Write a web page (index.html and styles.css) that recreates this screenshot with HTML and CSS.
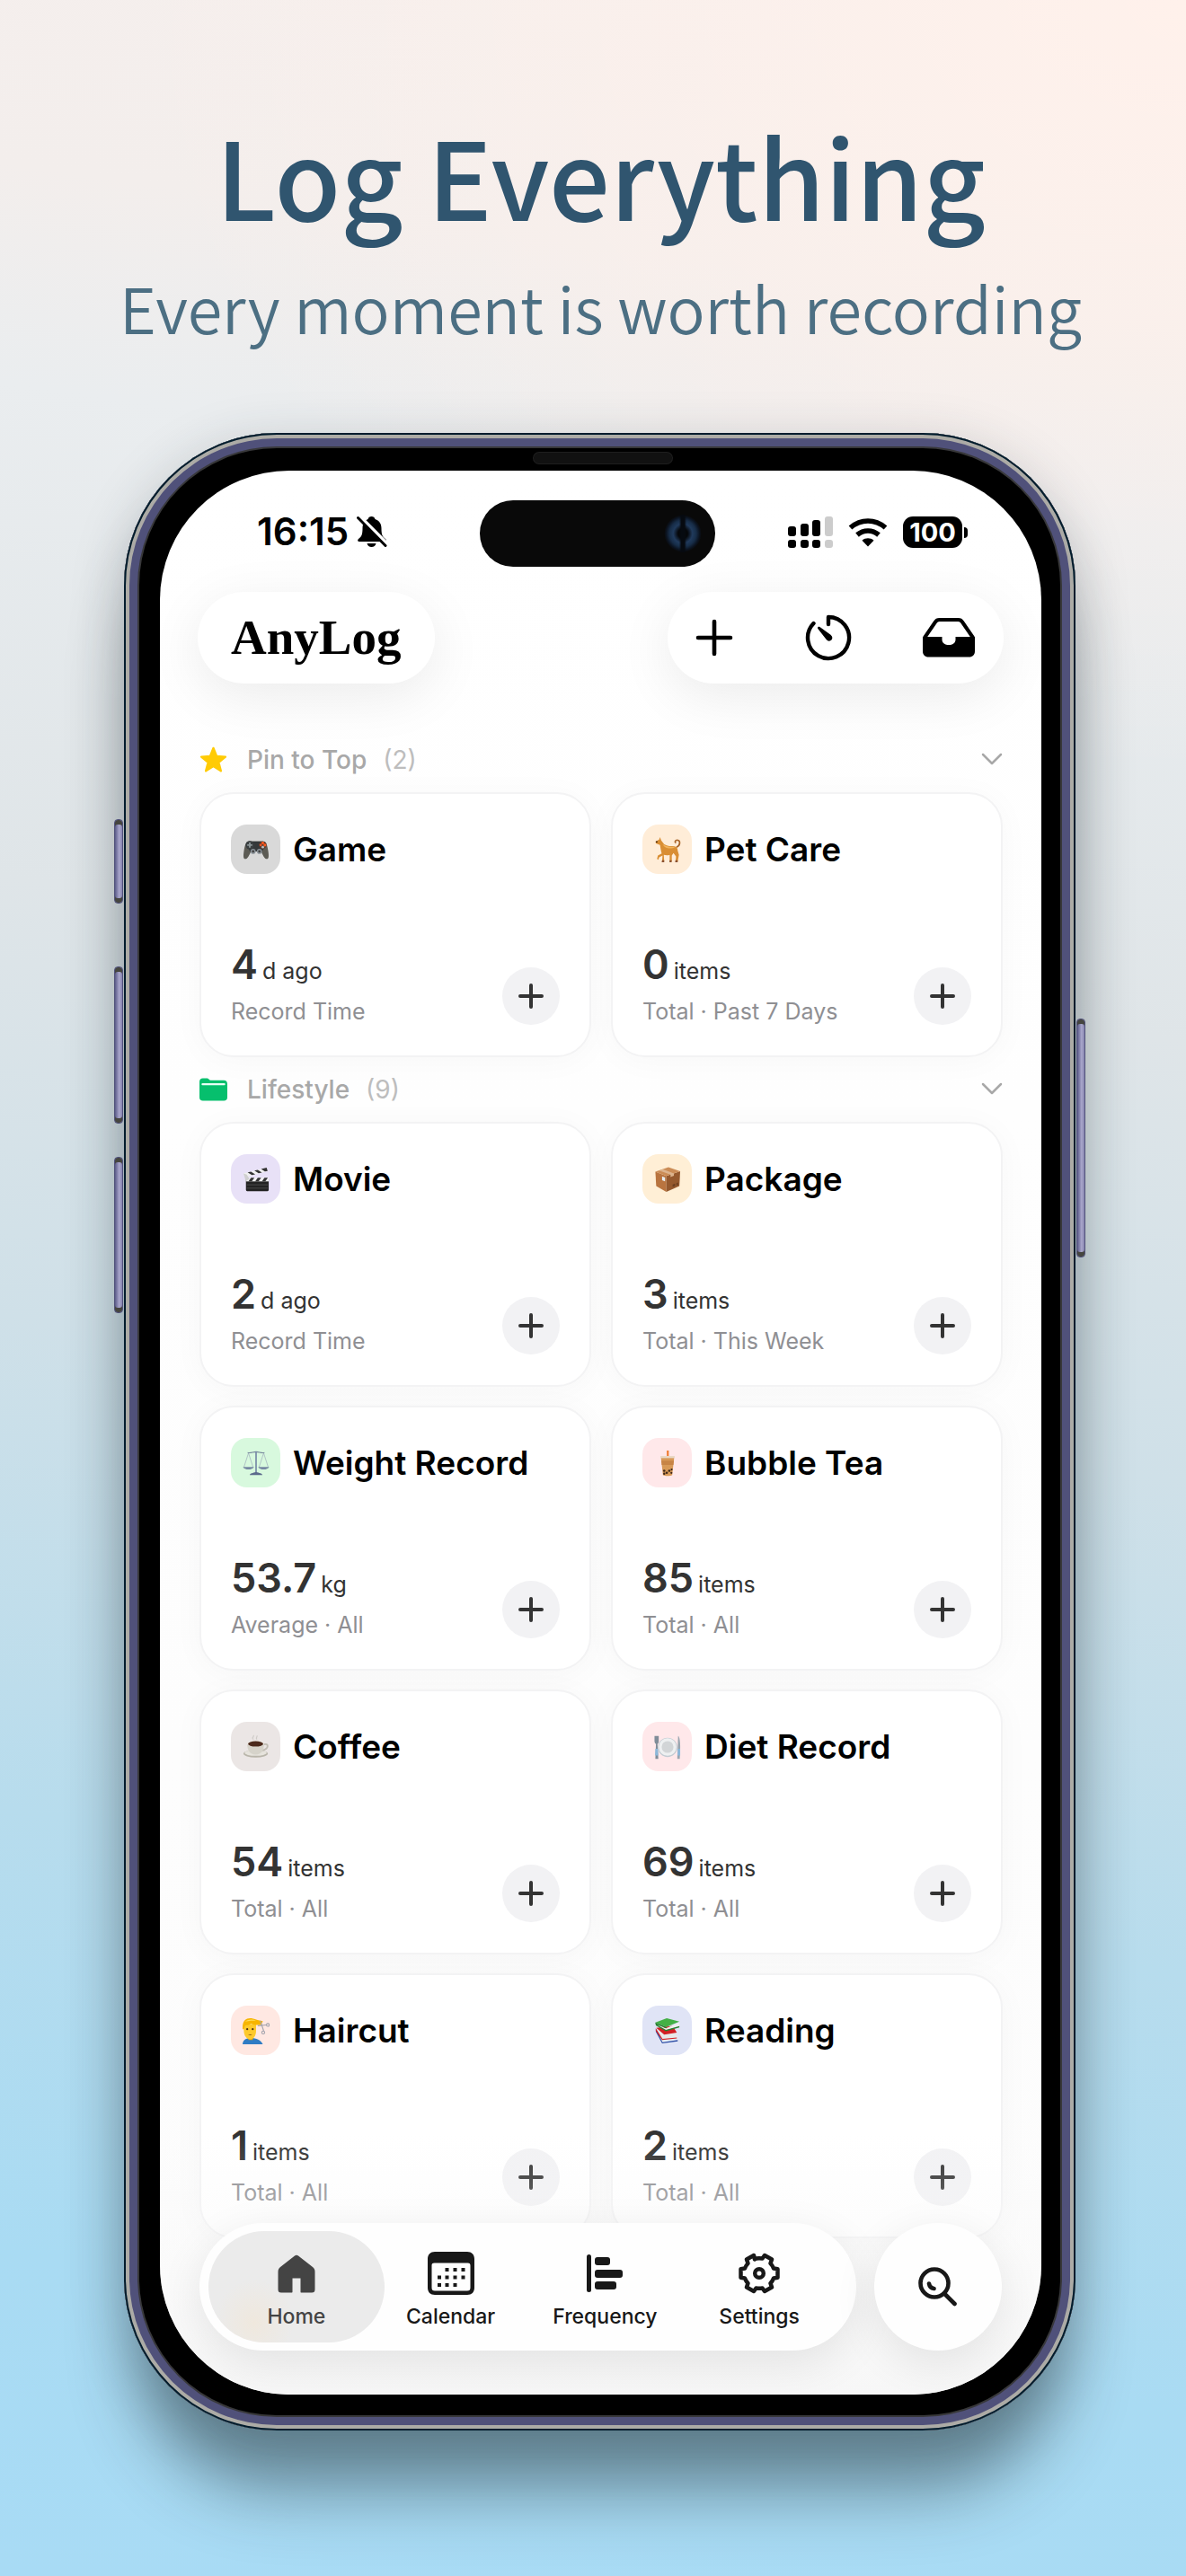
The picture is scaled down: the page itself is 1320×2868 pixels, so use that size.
FILE: index.html
```html
<!DOCTYPE html>
<html lang="en">
<head>
<meta charset="utf-8">
<meta name="viewport" content="width=device-width, initial-scale=1">
<title>AnyLog – Log Everything</title>
<link rel="stylesheet" href="styles.css">
</head>
<body>
<svg class="sprite" aria-hidden="true">
  <symbol id="plus" viewBox="0 0 28 28"><path d="M14 2v24M2 14h24" fill="none" stroke="currentColor" stroke-width="4" stroke-linecap="round"/></symbol>
  <symbol id="chevron" viewBox="0 0 24 16"><path d="M2 2l10 10L22 2" fill="none" stroke="currentColor" stroke-width="2.500" stroke-linecap="round" stroke-linejoin="round"/></symbol>
</svg>
<main class="page">
  <header class="hero">
    <h1 class="hero-title">Log Everything</h1>
    <p class="hero-sub">Every moment is worth recording</p>
  </header>

  <div class="phone">
    <span class="key key-action"></span>
    <span class="key key-up"></span>
    <span class="key key-down"></span>
    <span class="key key-power"></span>
    <span class="speaker"></span>

    <div class="screen">
      <div class="status">
        <div class="status-left">
          <span class="clock">16:15</span>
          <svg class="bell" viewBox="0 0 34 36" aria-label="Silent"><path d="M16.500 1c2 0 3.500 1.300 4 3 4.500 1.600 7 5 7 10 0 7 1 9.500 4.500 12 1.500 1.200 1 3-1 3H3c-2 0-2.500-1.800-1-3 3.500-2.500 4.500-5 4.500-12 0-5 2-8.400 6-10 .5-1.700 2-3 4-3zM11.500 31h10c-.5 2.500-2.500 4-5 4s-4.500-1.500-5-4z" fill="#000"/><path d="M3 .5L35 32.500" stroke="#fff" stroke-width="4"/><path d="M1.500 2.500L32 33.500" stroke="#000" stroke-width="3" stroke-linecap="round"/></svg>
        </div>
        <div class="island"><span class="lens"></span></div>
        <div class="status-right">
          <svg class="signal" viewBox="0 0 50 35" aria-label="Signal"><g fill="#000"><rect y="11" width="9" height="11" rx="3"/><rect x="14" y="8" width="9" height="14" rx="3"/><rect x="27" y="4" width="9" height="18" rx="3"/><rect y="26" width="9" height="9" rx="3"/><rect x="14" y="26" width="9" height="9" rx="3"/><rect x="27" y="26" width="9" height="9" rx="3"/></g><g fill="#ccc"><rect x="41" width="9" height="22" rx="3"/><rect x="41" y="26" width="9" height="9" rx="3"/></g></svg>
          <svg class="wifi" viewBox="0 0 44 33" aria-label="Wi-Fi"><path d="M22 32.500l-6.500-6.800c3.700-3.200 9.300-3.200 13 0z" fill="#000"/><path d="M10 19.500c7-6 17-6 24 0M2.500 11.500c11.500-10 27.500-10 39 0" fill="none" stroke="#000" stroke-width="5.600"/></svg>
          <span class="battery">100</span>
        </div>
      </div>

      <div class="topbar">
        <div class="pill brand">AnyLog</div>
        <div class="pill actions">
          <button class="action" aria-label="Add"><svg width="42" height="42" viewBox="0 0 42 42"><path d="M21 3v36M3 21h36" fill="none" stroke="#000" stroke-width="4.600" stroke-linecap="round"/></svg></button>
          <button class="action" aria-label="Timer"><svg width="52" height="52" viewBox="0 0 52 52"><path d="M26 11V3a23 23 0 1 1-16.500 7" fill="none" stroke="#000" stroke-width="4.400" stroke-linecap="round" stroke-linejoin="round"/><path d="M14.300 14.200c.7-.7 1.400-.6 2.100-.1l12.100 8.600c2.200 1.700 2.400 4.300.9 5.900-1.700 1.700-4.300 1.400-5.900-.8L14.300 16c-.5-.7-.5-1.300 0-1.800z" fill="#000"/></svg></button>
          <button class="action" aria-label="Inbox"><svg width="58" height="44" viewBox="0 0 58 44"><path d="M2 22L14 4.500C15 2.800 16.500 2 18.500 2h21c2 0 3.500.8 4.500 2.500L56 22" fill="none" stroke="#000" stroke-width="4" stroke-linejoin="round"/><path d="M0 21h21.500v3c0 4 3.500 6 7.500 6s7.500-2 7.500-6v-3H58v16c0 4-2.500 6.500-6.500 6.500h-45C2.500 43.500 0 41 0 37z" fill="#000"/></svg></button>
        </div>
      </div>

      <section class="group">
        <header class="group-head">
          <svg class="group-icon" viewBox="0 0 32 30"><path d="M16 1.500l3.700 9.400 10.100.6-7.800 6.400 2.600 9.800L16 22.200l-8.600 5.500L10 17.900l-7.800-6.400 10.100-.6z" fill="#ffcb05" stroke="#ffcb05" stroke-width="2.500" stroke-linejoin="round"/></svg>
          <h2 class="group-name">Pin to Top</h2><span class="group-count">(2)</span>
          <button class="fold" aria-label="Collapse Pin to Top"><svg width="24" height="16"><use href="#chevron"/></svg></button>
        </header>
        <div class="cards">
          <article class="card">
            <div class="card-head"><span class="tile gray"><svg viewBox="0 0 32 32"><path d="M8 6h16c4 0 5.500 5 6.500 12 .7 5 .8 9-1.700 9-2.800 0-4.800-5-6.800-9H10c-2 4-4 9-6.800 9-2.500 0-2.400-4-1.700-9C2.500 11 4 6 8 6z" fill="#5c5b54"/><path d="M8 6h16c2 0 3 2 3.500 5L23 18H9l-4.500-7C5 8 6 6 8 6z" fill="#34383a"/><circle cx="8.500" cy="10.500" r="5" fill="#3a3f41"/><path d="M8.500 7.500v6M5.500 10.500h6" stroke="#8b9597" stroke-width="2"/><circle cx="12.500" cy="18" r="3" fill="#8a9299"/><circle cx="20" cy="18" r="3" fill="#8a9299"/><circle cx="12.500" cy="18" r="1.500" fill="#444"/><circle cx="20" cy="18" r="1.500" fill="#444"/><circle cx="24" cy="10.500" r="4.500" fill="#5a3b30"/><circle cx="24" cy="8" r="1.700" fill="#ff5a1f"/><circle cx="21.500" cy="10.500" r="1.500" fill="#e8572a"/><circle cx="26.500" cy="10.500" r="1.700" fill="#ff5a1f"/><circle cx="24" cy="13" r="1.500" fill="#b9c1c4"/></svg></span><h3 class="card-title">Game</h3></div>
            <div class="card-foot"><div class="stat"><p class="value">4 <small class="unit">d ago</small></p><p class="note">Record Time</p></div><button class="add" aria-label="Add Game"><svg width="28" height="28"><use href="#plus"/></svg></button></div>
          </article>
          <article class="card">
            <div class="card-head"><span class="tile orange"><svg viewBox="0 0 32 32"><path d="M7 1l1.500 4L12 9.500c4 2.500 8 2 12 2.500 2.500.5 4 2 4 5l1.500 5-1.500 8h-2.500l.5-6-3-4-2 3v7h-2.500v-8c-3 1-5 .5-7 0L12 30H9.500l.5-7-4 2-1 3-1.500-1 1-4 4.500-2.500C8 17 7.500 13 7 10.500l-5-2V6l4-2z" fill="#d98e33"/><path d="M10 9c4 4 9 3 15 4-4 2-12 3-15-4z" fill="#f2b45c"/><path d="M26.500 13c5-2 5-8 1-8.500-2.500 0-3.500 2.500-1.500 3.500" fill="none" stroke="#a9652a" stroke-width="1.800"/><path d="M2 6h2v1.500H2z" fill="#3b2412"/><path d="M9.500 28.500H12V31H9zM18.500 28.500h2.300V31h-2.600zM25.300 28.500H28V31h-3z" fill="#8a5030"/></svg></span><h3 class="card-title">Pet Care</h3></div>
            <div class="card-foot"><div class="stat"><p class="value">0 <small class="unit">items</small></p><p class="note">Total · Past 7 Days</p></div><button class="add" aria-label="Add Pet Care"><svg width="28" height="28"><use href="#plus"/></svg></button></div>
          </article>
        </div>
      </section>

      <section class="group">
        <header class="group-head">
          <svg class="group-icon" viewBox="0 0 32 26"><path d="M0 4c0-2.500 1.500-4 4-4h4.500C11 0 11 2.500 13.500 2.500H28c2.500 0 4 1.500 4 4V22c0 2.500-1.500 4-4 4H4c-2.500 0-4-1.500-4-4z" fill="#06bf6d"/><path d="M3.500 7h25" stroke="#e8fff5" stroke-width="2.200" stroke-linecap="round"/></svg>
          <h2 class="group-name">Lifestyle</h2><span class="group-count">(9)</span>
          <button class="fold" aria-label="Collapse Lifestyle"><svg width="24" height="16"><use href="#chevron"/></svg></button>
        </header>
        <div class="cards">
          <article class="card">
            <div class="card-head"><span class="tile violet"><svg viewBox="0 0 32 32"><path d="M4 16h27v12.500c0 1-.6 1.500-1.500 1.500h-24C4.600 30 4 29.500 4 28.500z" fill="#232323"/><path d="M1 9L28.500 2l1.200 4.500L2.500 13.500z" fill="#f1f1f1"/><path d="M6 7.800L11 11l4-1-5-3.200zM14 5.700l5 3.200 4-1-5-3.200zM22 3.700l4.500 3L29.700 6 28.500 2z" fill="#333"/><path d="M4 14h27v4.500H4z" fill="#f1f1f1"/><path d="M7 18.500l3-4.500h4l-3 4.500zM15 18.500l3-4.500h4l-3 4.500zM23 18.500l3-4.500h4l-3 4.500z" fill="#333"/><path d="M1 9l4 1.500 3 5-4 3z" fill="#cfcfcf"/><path d="M5 22.500h25M5 26.500h25" stroke="#555" stroke-width=".8"/></svg></span><h3 class="card-title">Movie</h3></div>
            <div class="card-foot"><div class="stat"><p class="value">2 <small class="unit">d ago</small></p><p class="note">Record Time</p></div><button class="add" aria-label="Add Movie"><svg width="28" height="28"><use href="#plus"/></svg></button></div>
          </article>
          <article class="card">
            <div class="card-head"><span class="tile amber"><svg viewBox="0 0 32 32"><path d="M1.500 7l13 5v19L2.500 24z" fill="#b9743f"/><path d="M14.500 12L31 6.500 30 24l-15.500 7z" fill="#95592e"/><path d="M1.500 7L17 1.500l14 5L14.500 12z" fill="#cb8c56"/><path d="M6 5.500l13.500 4.800v3l4-1.500V9L10.500 4z" fill="#dcb38d"/><path d="M9.500 12.500l3.500 1.300v4.500L9.500 17z" fill="#e7eef2"/><path d="M22 22l3-1v3l-3 1zM26.500 20.500l2-.7v3l-2 .7z" fill="#6c3f20"/></svg></span><h3 class="card-title">Package</h3></div>
            <div class="card-foot"><div class="stat"><p class="value">3 <small class="unit">items</small></p><p class="note">Total · This Week</p></div><button class="add" aria-label="Add Package"><svg width="28" height="28"><use href="#plus"/></svg></button></div>
          </article>
          <article class="card">
            <div class="card-head"><span class="tile green"><svg viewBox="0 0 32 32"><g fill="none" stroke="#9aa8b8" stroke-width=".7"><path d="M7 4L1.500 21M7 4l5.500 17M25 4l-5.500 17M25 4l5.500 17"/></g><path d="M6 3.500c4 1 6-1 10-1s6 2 10 1" fill="none" stroke="#77889c" stroke-width="1.300"/><path d="M16 2v25" stroke="#7283a4" stroke-width="1.700"/><path d="M.5 20.500h13c-1.500 4-11.500 4-13 0zM18.500 20.500h13c-1.500 4-11.500 4-13 0z" fill="#7688a2"/><path d="M8.500 30c.5-2 3.500-2 7.500-3.500 4 1.500 7 1.500 7.500 3.500z" fill="#5b6a8c"/></svg></span><h3 class="card-title">Weight Record</h3></div>
            <div class="card-foot"><div class="stat"><p class="value">53.7 <small class="unit">kg</small></p><p class="note">Average · All</p></div><button class="add" aria-label="Add Weight Record"><svg width="28" height="28"><use href="#plus"/></svg></button></div>
          </article>
          <article class="card">
            <div class="card-head"><span class="tile pink"><svg viewBox="0 0 32 32"><path d="M15 1h2.500v8H15z" fill="#f0803a"/><path d="M8 8h16l-2.500 22c-2 1.500-9 1.500-11 0z" fill="#d89a58"/><path d="M8.500 13h15l-.6 5h-13.800z" fill="#c78446"/><path d="M7.500 7.500h17V10h-17z" fill="#ead9c8"/><g fill="#3f2719"><circle cx="12" cy="25" r="1.400"/><circle cx="15" cy="27.500" r="1.400"/><circle cx="18" cy="25" r="1.400"/><circle cx="20.500" cy="27.500" r="1.200"/><circle cx="12" cy="28.500" r="1.300"/><circle cx="20.800" cy="23.500" r="1.200"/></g></svg></span><h3 class="card-title">Bubble Tea</h3></div>
            <div class="card-foot"><div class="stat"><p class="value">85 <small class="unit">items</small></p><p class="note">Total · All</p></div><button class="add" aria-label="Add Bubble Tea"><svg width="28" height="28"><use href="#plus"/></svg></button></div>
          </article>
          <article class="card">
            <div class="card-head"><span class="tile brown"><svg viewBox="0 0 32 32"><ellipse cx="15.500" cy="24" rx="14.500" ry="4.500" fill="#b9b5aa"/><ellipse cx="15.500" cy="23" rx="13" ry="3.500" fill="#e6e3dc"/><path d="M25 13c6-2 7 5-1.500 7" fill="none" stroke="#c0bdb3" stroke-width="2"/><path d="M5.500 12h20c0 8-3 13-10 13s-10-5-10-13z" fill="#d6d3ca"/><ellipse cx="15.500" cy="12" rx="10" ry="3.800" fill="#efece5"/><ellipse cx="15.500" cy="12.300" rx="9" ry="3.200" fill="#4c2a1c"/><path d="M13 7c-3-2 1-3 0-5M17 7c-2-2 1-3 0-4.500" fill="none" stroke="#cfcbc8" stroke-width="1.300"/></svg></span><h3 class="card-title">Coffee</h3></div>
            <div class="card-foot"><div class="stat"><p class="value">54 <small class="unit">items</small></p><p class="note">Total · All</p></div><button class="add" aria-label="Add Coffee"><svg width="28" height="28"><use href="#plus"/></svg></button></div>
          </article>
          <article class="card">
            <div class="card-head"><span class="tile pink"><svg viewBox="0 0 32 32"><circle cx="16" cy="16.500" r="11.500" fill="#c3ccd3"/><circle cx="16" cy="16" r="10.500" fill="#eef0f1"/><circle cx="16" cy="16" r="7" fill="#d2d5d7"/><path d="M.5 3h5v6c0 2-1 3-1.500 3.500L5 30H1.500l.7-17.500C1.500 12 .5 11 .5 9z" fill="#7f8c98"/><path d="M1.500 18h3l.5 8H1.200z" fill="#8cb8da"/><path d="M28.500 3c2 1 2.500 8 2.500 14l-.5 13h-3z" fill="#9aa6b0"/><path d="M28 18h3v8h-3.200z" fill="#8cb8da"/></svg></span><h3 class="card-title">Diet Record</h3></div>
            <div class="card-foot"><div class="stat"><p class="value">69 <small class="unit">items</small></p><p class="note">Total · All</p></div><button class="add" aria-label="Add Diet Record"><svg width="28" height="28"><use href="#plus"/></svg></button></div>
          </article>
          <article class="card">
            <div class="card-head"><span class="tile peach"><svg viewBox="0 0 32 32"><path d="M0 32c0-5 4-7.500 10-7.500S22 27 24 32z" fill="#2f7cc4"/><path d="M6 22h7l-1 5H7z" fill="#e0a010"/><path d="M1.500 8h14.500v8c0 6-3 10-7 10s-7.500-4-7.500-10z" fill="#fdc92c"/><path d="M0 14C-.5 5 3 1 9 1c5 0 7 2.500 15 3.500L22 9c-5 .5-9 0-12-1.500-2 2-5 2-7 2L1.500 14z" fill="#f7b500"/><path d="M3 5c4-3 9-3 13-1-4 0-8 0-13 1z" fill="#ffdf5a"/><circle cx="5.500" cy="14" r="1.200" fill="#4b2d14"/><circle cx="12" cy="14" r="1.200" fill="#4b2d14"/><path d="M6.500 21c1.500-1 3.500-1 5 0z" fill="#6a3411"/><g fill="none" stroke="#a3a3ad" stroke-width="1.200"><path d="M18 10l10-1M21 4l4 12"/><circle cx="30" cy="9" r="1.700"/><circle cx="24.500" cy="18" r="1.700"/></g></svg></span><h3 class="card-title">Haircut</h3></div>
            <div class="card-foot"><div class="stat"><p class="value">1 <small class="unit">items</small></p><p class="note">Total · All</p></div><button class="add" aria-label="Add Haircut"><svg width="28" height="28"><use href="#plus"/></svg></button></div>
          </article>
          <article class="card">
            <div class="card-head"><span class="tile blue"><svg viewBox="0 0 32 32"><path d="M6 22l4 7 18-2.500v-4L12 25z" fill="#e9edf2"/><path d="M2 13l8 16.500 18-2.500v1.500L9.500 31 2 17z" fill="#2f4fa5"/><path d="M3 14l18-3 6 8v5l-17 1.500z" fill="#e8e8e8"/><path d="M2.500 12.500L22 10l5 8-15 2.500zM2 13l8 12.500L27 24v1L9.500 26.800 2 16z" fill="#d31f24"/><path d="M1.500 8l12 7.500L30 11V6.500L14 13z" fill="#efefef"/><path d="M1.500 6L15 1l15 4-15.500 6.500z" fill="#43b045"/><path d="M1.500 6L14.500 11.500V13L1.500 8zM14 15l16-4.500V12l-16 4.500L2 9.500V8z" fill="#25802e"/></svg></span><h3 class="card-title">Reading</h3></div>
            <div class="card-foot"><div class="stat"><p class="value">2 <small class="unit">items</small></p><p class="note">Total · All</p></div><button class="add" aria-label="Add Reading"><svg width="28" height="28"><use href="#plus"/></svg></button></div>
          </article>
        </div>
      </section>

      <div class="dock">
        <nav class="tabs">
          <a class="tab active" href="#home"><svg width="44" height="50" viewBox="0 0 44 50"><path d="M20 5.500c1.300-1 2.700-1 4 0L40 18c2 1.600 2.500 3 2.500 5.500V43c0 2.500-1 3.500-3.500 3.500H27.500c-.8 0-1-.3-1-1V30.500h-9v15c0 .7-.2 1-1 1H5c-2.500 0-3.500-1-3.500-3.500V23.500C1.500 21 2 19.600 4 18z" fill="currentColor"/></svg>Home</a>
          <a class="tab" href="#calendar"><svg width="54" height="50" viewBox="0 0 54 50"><path d="M9 1h36c5 0 8 3 8 8v32c0 5-3 8-8 8H9c-5 0-8-3-8-8V9c0-5 3-8 8-8zM8.500 13.500c-2.500 0-3 1-3 3V41c0 2.500 1 3.500 3.500 3.500h36c2.500 0 3.500-1 3.500-3.500V16.500c0-2-.5-3-3-3z" fill="currentColor" fill-rule="evenodd"/><path d="M20.500 21h4M29.500 21h4M38.500 21h4M12 29.500h4M20.500 29.500h4M29.500 29.500h4M38.500 29.500h4M12 38h4M20.500 38h4M29.500 38h4" stroke="currentColor" stroke-width="4"/></svg>Calendar</a>
          <a class="tab" href="#frequency"><svg width="40" height="50" viewBox="0 0 40 50"><g fill="currentColor"><rect y="4" width="5" height="42" rx="2.500"/><rect x="9" y="7" width="17" height="9" rx="3"/><rect x="9" y="21" width="31" height="9" rx="3"/><rect x="9" y="34" width="24" height="9" rx="3"/></g></svg>Frequency</a>
          <a class="tab" href="#settings"><svg width="46" height="50" viewBox="0 0 46 50"><path d="M18 9.500L17 5l-8 4.500 1.500 4.500c-1.500 1.500-2.700 3.300-3.500 5.500l-4.500.8v9.400l4.500.8c.8 2.200 2 4 3.500 5.500L9 40.500l8 4.500 2.500-3.500c2.300.4 4.700.4 7 0L29 45l8-4.500-1.500-4.500c1.500-1.500 2.700-3.300 3.500-5.500l4.500-.8v-9.400l-4.500-.8c-.8-2.200-2-4-3.500-5.500L37 9.500 29 5l-2.500 3.500c-2.300-.4-4.700-.4-7 0z" fill="none" stroke="currentColor" stroke-width="4.500" stroke-linejoin="round"/><circle cx="23" cy="25" r="4.800" fill="none" stroke="currentColor" stroke-width="4.500"/></svg>Settings</a>
        </nav>
        <button class="search" aria-label="Search"><svg width="44" height="44" viewBox="0 0 44 44"><circle cx="18" cy="18" r="15.500" fill="none" stroke="#181818" stroke-width="4.600"/><path d="M29.500 30L40.500 41M12 18.500c.5 3 2.500 5 5.500 5.500" fill="none" stroke="#181818" stroke-width="4.600" stroke-linecap="round"/></svg></button>
      </div>
    </div>
  </div>
</main>
</body>
</html>
```
FILE: styles.css
```css
* { box-sizing: border-box; }

body {
  margin: 0;
  min-height: 100vh;
  font-family: Inter, "Liberation Sans", sans-serif;
  color: #000;
  background:
    radial-gradient(ellipse 90% 30% at 100% 0%, #fff1eb 0%, rgba(255, 241, 235, 0) 100%),
    linear-gradient(188deg, #f6efed 0%, #f3eeec 12%, #eaedef 20%, #dfe5e8 38%, #cfe0e8 54%, #b7dced 72%, #a9dbf3 88%, #a8dbf5 100%);
}

h1, h2, h3, p { margin: 0; }

button {
  margin: 0;
  padding: 0;
  border: 0;
  background: none;
  color: inherit;
  font: inherit;
}

svg { display: block; }

.sprite { position: absolute; width: 0; height: 0; }

.page {
  padding: 122px 123px 162px 138px;
}

/* Headline */
.hero {
  display: flex;
  flex-direction: column;
  align-items: center;
  gap: 34px;
  margin: 0 -62px 98px -60px;
  font-family: "Noto Sans CJK SC", "Noto Sans", sans-serif;
  text-align: center;
}

.hero-title {
  font-size: 120px;
  line-height: 144px;
  font-weight: 500;
  color: #30556f;
}

.hero-sub {
  font-size: 70px;
  line-height: 84px;
  font-weight: 350;
  color: #4c6f83;
}

/* Device */
.phone {
  position: relative;
  padding: 42px 38px 40px 40px;
  border-radius: 170px;
  background: #000;
  box-shadow:
    inset 0 0 0 2px #001c2d,
    inset 0 0 0 6px #acaba6,
    inset 0 0 0 15px #50517a,
    inset 0 0 0 17px #38383a,
    0 84px 76px -16px rgba(30, 45, 50, .46),
    0 14px 60px rgba(40, 50, 60, .22);
}

.key {
  position: absolute;
  left: -11px;
  width: 10px;
  border: 1px solid #50517a;
  border-radius: 4px;
  background: linear-gradient(90deg, #5a5a88, #aaa7cc 60%, #8482ad);
  box-shadow: inset 0 5px 0 #45453f, inset 0 -5px 0 #45453f;
}

.key-action { top: 430px; height: 94px; }
.key-up { top: 594px; height: 175px; }
.key-down { top: 806px; height: 174px; }
.key-power { left: auto; right: -11px; top: 652px; height: 266px; }

.speaker {
  position: absolute;
  top: 22px;
  left: 50%;
  width: 154px;
  height: 12px;
  margin-left: -74px;
  border-radius: 6px;
  background: #111;
  box-shadow: 0 0 0 1px #1e1e1e;
}

.screen {
  position: relative;
  overflow: hidden;
  padding: 33px 43px 174px 44px;
  border-radius: 144px;
  background: linear-gradient(#fff, #fcfcfc);
}

/* Fade under the dock */
.screen::after {
  content: "";
  position: absolute;
  inset: auto 0 0;
  height: 290px;
  background: linear-gradient(rgba(250, 250, 250, 0), rgba(248, 248, 248, .5) 60%, #f7f7f7);
  pointer-events: none;
}

/* Status bar */
.status {
  display: grid;
  grid-template-columns: 1fr 262px 1fr;
  align-items: center;
  margin: 0 -35px 28px -44px;
}

.status-left {
  display: flex;
  align-items: center;
  gap: 9px;
  padding: 0 0 4px 108px;
}

.clock { font-size: 42px; line-height: 48px; font-weight: 600; }

.bell { width: 34px; height: 36px; }

.island {
  display: flex;
  align-items: center;
  justify-content: flex-end;
  height: 74px;
  padding-right: 15px;
  border-radius: 37px;
  background: #090909;
}

.lens {
  width: 42px;
  height: 42px;
  border-radius: 50%;
  background:
    linear-gradient(90deg, transparent 40%, #060a10 46%, #060a10 54%, transparent 60%),
    radial-gradient(circle, #05070a 18%, #203a5c 36%, #172d48 50%, #0b1320 62%, #090909 70%);
}

.status-right {
  display: flex;
  align-items: center;
  justify-content: flex-end;
  gap: 17px;
  padding: 0 80px 4px 0;
}

.signal { width: 50px; height: 35px; }
.wifi { width: 44px; height: 33px; }

.battery {
  position: relative;
  width: 66px;
  border-radius: 11px;
  background: #000;
  color: #fff;
  font-size: 29px;
  line-height: 35px;
  font-weight: 700;
  text-align: center;
}

.battery::after {
  content: "";
  position: absolute;
  right: -6px;
  top: 12px;
  width: 4px;
  height: 12px;
  border-radius: 0 6px 6px 0;
  background: #000;
}

/* Header */
.topbar {
  display: flex;
  justify-content: space-between;
  margin: 0 -1px 49px -2px;
}

.pill {
  display: flex;
  align-items: center;
  height: 102px;
  border-radius: 51px;
  background: #fff;
  box-shadow: 0 14px 60px rgba(0, 0, 0, .08);
}

.brand {
  padding: 0 37px;
  font-family: "Liberation Serif", serif;
  font-size: 55px;
  line-height: 64px;
  font-weight: 700;
}

.actions {
  width: 374px;
  padding: 0 32px 0 31px;
  justify-content: space-between;
}

/* Sections */
.group-head {
  display: flex;
  align-items: center;
  height: 72px;
  color: #a8a8a8;
  font-size: 28px;
  line-height: 32px;
}

.group-icon { width: 31px; height: 30px; margin-right: 22px; }

.group-name { font-size: inherit; font-weight: 500; }

.group-count { margin-left: 18px; color: #bdbdbd; }

.fold { margin-left: auto; }

.cards {
  display: grid;
  grid-template-columns: 1fr 1fr;
  gap: 21px 22px;
}

.card {
  display: flex;
  flex-direction: column;
  justify-content: space-between;
  min-height: 295px;
  padding: 34px 33px;
  border: 2px solid #f3f3f4;
  border-radius: 38px;
  background: #fff;
  box-shadow: 0 4px 36px rgba(0, 0, 0, .03);
}

.card-head {
  display: flex;
  align-items: center;
  gap: 14px;
}

.tile {
  display: grid;
  place-items: center;
  width: 55px;
  height: 55px;
  border-radius: 18px;
}

.tile svg { width: 30px; height: 30px; }

.gray { background: #d9d9d9; }
.orange { background: #ffedd8; }
.violet { background: #e8e1f7; }
.amber { background: #ffefd6; }
.green { background: #d8f9de; }
.pink { background: #ffe8ea; }
.brown { background: #ebe6e5; }
.peach { background: #ffe8e2; }
.blue { background: #e0e4f6; }

.card-title { font-size: 37px; line-height: 46px; font-weight: 600; }

.card-foot {
  display: flex;
  align-items: flex-end;
  justify-content: space-between;
}

.value {
  margin-bottom: 15px;
  font-size: 45px;
  line-height: 44px;
  font-weight: 600;
  color: #333;
  display: flex;
  align-items: baseline;
  gap: 5px;
}

.unit { font-size: 25px; line-height: 30px; font-weight: 400; }

.note { font-size: 25px; line-height: 30px; color: #8f8f93; }

.add {
  display: grid;
  place-items: center;
  width: 64px;
  height: 64px;
  border-radius: 50%;
  background: #f2f2f4;
  color: #333;
}

/* Floating dock */
.dock {
  position: absolute;
  z-index: 1;
  left: 44px;
  right: 44px;
  bottom: 49px;
  display: flex;
  gap: 20px;
}

.tabs {
  flex: 1;
  display: grid;
  grid-template-columns: repeat(4, 1fr);
  align-items: center;
  height: 142px;
  padding: 0 22px;
  border-radius: 71px;
  background: #fefefe;
  box-shadow: 0 14px 50px rgba(0, 0, 0, .09);
}

.tab {
  display: flex;
  flex-direction: column;
  align-items: center;
  justify-content: flex-end;
  gap: 9px;
  height: 124px;
  margin: 0 -12px;
  padding-bottom: 15px;
  border-radius: 62px;
  color: #181818;
  font-size: 23px;
  line-height: 28px;
  font-weight: 500;
  text-decoration: none;
}

.active {
  color: #444;
  background:
    radial-gradient(ellipse 44px 48px at 26% 82%, rgba(242, 230, 212, .6), transparent),
    #ebebeb;
}

.search {
  display: grid;
  place-items: center;
  width: 142px;
  height: 142px;
  border-radius: 50%;
  background: #fefefe;
  box-shadow: 0 14px 50px rgba(0, 0, 0, .09);
}
```
